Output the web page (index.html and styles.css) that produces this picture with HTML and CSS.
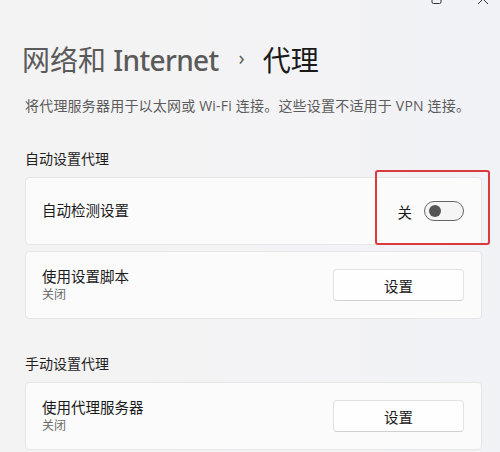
FILE: index.html
```html
<!DOCTYPE html>
<html lang="zh-CN">
<head>
<meta charset="utf-8">
<link rel="stylesheet" href="styles.css">
</head>
<body>
<div class="window">
  <div class="titlebar">
    <svg class="ctl max" width="12" height="12" viewBox="0 0 12 12"><rect x="1" y="0.5" width="9" height="10" rx="1.5" fill="none" stroke="#333" stroke-width="1"/></svg>
    <svg class="ctl close" width="12" height="12" viewBox="0 0 12 12"><path d="M1 1 L11 11 M11 1 L1 11" stroke="#333" stroke-width="1" fill="none"/></svg>
  </div>
  <div class="content">
    <h1 class="crumb"><span class="parent">网络和 <span class="latin">Internet</span></span><span class="sep">›</span><span class="current">代理</span></h1>
    <p class="desc">将代理服务器用于以太网或 Wi-Fi 连接。这些设置不适用于 VPN 连接。</p>

    <h2 class="section">自动设置代理</h2>
    <div class="card">
      <div class="label"><div class="title">自动检测设置</div></div>
      <div class="ctrl">
        <span class="state">关</span>
        <span class="toggle"><span class="knob"></span></span>
        <span class="highlight"></span>
      </div>
    </div>
    <div class="card">
      <div class="label"><div class="title">使用设置脚本</div><div class="sub">关闭</div></div>
      <button class="btn">设置</button>
    </div>

    <h2 class="section s2">手动设置代理</h2>
    <div class="card">
      <div class="label"><div class="title">使用代理服务器</div><div class="sub">关闭</div></div>
      <button class="btn">设置</button>
    </div>
  </div>
</div>
</body>
</html>
```
FILE: styles.css
```css
html, body {
  margin: 0;
  padding: 0;
}
body {
  width: 500px;
  height: 452px;
  overflow: hidden;
  background: linear-gradient(90deg, #f4f3f3 0%, #f3f3f5 60%, #f1f2f6 100%);
  font-family: "Open Sans", "Noto Sans CJK SC", sans-serif;
  color: #1b1b1b;
}
.window {
  position: relative;
  height: 452px;
}
.titlebar {
  display: flex;
  justify-content: flex-end;
  align-items: flex-start;
  height: 0;
}
.ctl {
  position: absolute;
  top: -7px;
}
.max { left: 431px; }
.close { left: 477px; }
.content {
  padding: 0 18px 0 25px;
  display: flex;
  flex-direction: column;
}
.crumb {
  margin: 40px 0 0 -3px;
  font-weight: 400;
  font-size: 28px;
  line-height: 40px;
  display: flex;
  align-items: center;
  font-family: "Noto Sans", "Noto Sans CJK SC", sans-serif;
}
.latin {
  font-weight: 500;
  letter-spacing: -0.65px;
}
.parent { color: #5a5a5a; }
.sep {
  color: #5d5d5d;
  font-size: 20px;
  margin: 0 18px 0 20px;
  position: relative;
  top: -2px;
}
.current { color: #1a1a1a; font-weight: 400; }
.desc {
  margin: 16px 0 0 0;
  font-size: 14px;
  line-height: 20px;
  color: #5b5b5b;
  letter-spacing: 0.2px;
  font-family: "Open Sans", "Noto Sans CJK SC", sans-serif;
}
.section {
  margin: 33px 0 0 0;
  font-size: 14px;
  font-weight: 400;
  line-height: 20px;
  color: #1f1f1f;
}
.section.s2 { margin-top: 35px; }
.card {
  margin-top: 6px;
  height: 68px;
  box-sizing: border-box;
  background: #fbfbfb;
  border: 1px solid #e6e6e6;
  border-radius: 4px;
  display: flex;
  align-items: center;
  justify-content: space-between;
  padding: 0 17px 0 16px;
}
.section + .card { margin-top: 8px; }
.title {
  font-size: 14.5px;
  line-height: 20px;
  color: #1a1a1a;
}
.sub {
  font-size: 12px;
  line-height: 16px;
  color: #6a6a6a;
}
.ctrl {
  position: relative;
  display: flex;
  align-items: center;
}
.state {
  font-size: 14.5px;
  margin-right: 12px;
  color: #1a1a1a;
}
.toggle {
  width: 40px;
  height: 20px;
  box-sizing: border-box;
  border: 1px solid #666;
  border-radius: 10px;
  background: #f5f5f5;
  display: flex;
  align-items: center;
  padding-left: 4px;
}
.knob {
  width: 12px;
  height: 12px;
  border-radius: 50%;
  background: #555;
}
.highlight {
  position: absolute;
  left: -23px;
  top: -31px;
  width: 115px;
  height: 75px;
  box-sizing: border-box;
  border: 2.5px solid #d93a3e;
  border-radius: 3px;
}
.btn {
  width: 131px;
  height: 32px;
  background: #fefefe;
  border: 1px solid #e2e2e2;
  border-bottom-color: #d0d0d0;
  border-radius: 4px;
  font-family: "Open Sans", "Noto Sans CJK SC", sans-serif;
  font-size: 14.5px;
  color: #1a1a1a;
  padding: 0;
}
```
